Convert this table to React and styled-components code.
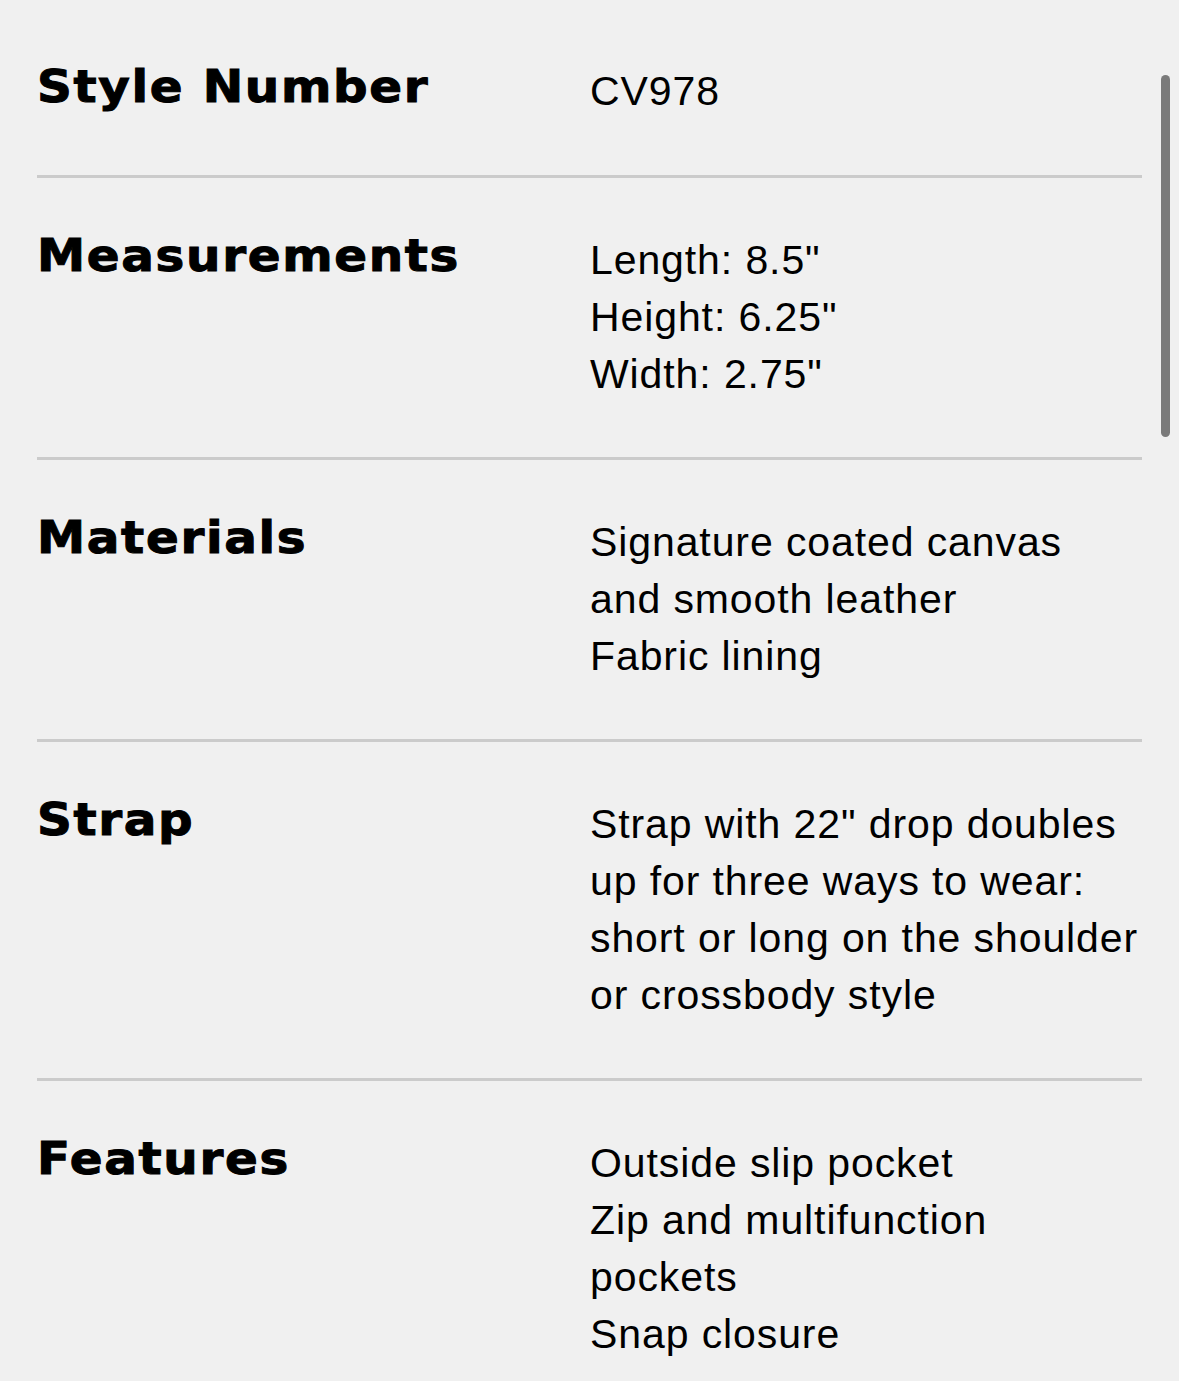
import React from "react";
import styled, { createGlobalStyle } from "styled-components";

const GlobalStyle = createGlobalStyle`
  html, body {
    overflow: hidden;
  }
  body {
    margin: 8px;
    background: #f0f0f0;
    color: #000;
  }
`;

const Sheet = styled.div`
  margin: 0 29px;
`;

const Row = styled.section`
  display: grid;
  grid-template-columns: 553px 1fr;
  padding: ${({ first }) => (first ? "55px 0 55px" : "54px 0")};
  border-top: ${({ first }) => (first ? "none" : "3px solid #cbcbcb")};
`;

const Label = styled.h3`
  margin: 0;
  font-family: "DejaVu Sans", sans-serif;
  font-weight: 700;
  font-size: 44px;
  line-height: 48px;
  letter-spacing: 1.5px;
  -webkit-text-stroke: 1px #000;
  white-space: nowrap;
  transform: scaleX(1.1);
  transform-origin: left center;
`;

const Values = styled.div`
  display: flex;
  flex-direction: column;
`;

const Line = styled.span`
  font-family: "Liberation Sans", Arial, sans-serif;
  font-size: 41px;
  line-height: 57px;
  letter-spacing: 0.9px;
  white-space: nowrap;
`;

const Scrollbar = styled.div`
  position: fixed;
  top: 75px;
  right: 9px;
  width: 9px;
  height: 362px;
  border-radius: 5px;
  background: #7a7a7a;
`;

const specs = [
  { label: "Style Number", lines: ["CV978"] },
  { label: "Measurements", lines: ['Length: 8.5"', 'Height: 6.25"', 'Width: 2.75"'] },
  {
    label: "Materials",
    lines: ["Signature coated canvas", "and smooth leather", "Fabric lining"],
  },
  {
    label: "Strap",
    lines: [
      'Strap with 22" drop doubles',
      "up for three ways to wear:",
      "short or long on the shoulder",
      "or crossbody style",
    ],
  },
  {
    label: "Features",
    lines: [
      "Outside slip pocket",
      "Zip and multifunction",
      "pockets",
      "Snap closure",
    ],
  },
];

export default function App() {
  return (
    <>
      <GlobalStyle />
      <Sheet>
        {specs.map((s, i) => (
          <Row key={s.label} first={i === 0}>
            <Label>{s.label}</Label>
            <Values>
              {s.lines.map((l) => (
                <Line key={l}>{l}</Line>
              ))}
            </Values>
          </Row>
        ))}
      </Sheet>
      <Scrollbar />
    </>
  );
}
